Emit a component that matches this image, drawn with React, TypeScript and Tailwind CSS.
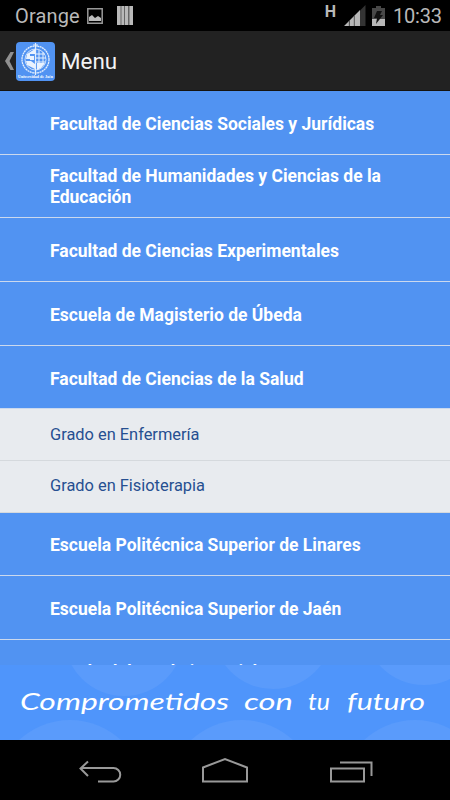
import React from 'react';

interface MenuRow {
  label: string;
  layout: string;
  children?: string[];
}

const rows: MenuRow[] = [
  { label: 'Facultad de Ciencias Sociales y Jurídicas', layout: 'h-16 pt-[3px]' },
  { label: 'Facultad de Humanidades y Ciencias de la Educación', layout: 'h-[63px] pt-px' },
  { label: 'Facultad de Ciencias Experimentales', layout: 'h-16 pt-[3px]' },
  { label: 'Escuela de Magisterio de Úbeda', layout: 'h-16 pt-[3px]' },
  { label: 'Facultad de Ciencias de la Salud', layout: 'h-[63px] pt-[4px]', children: ['Grado en Enfermería', 'Grado en Fisioterapia'] },
  { label: 'Escuela Politécnica Superior de Linares', layout: 'h-[63px] pt-[3px]' },
  { label: 'Escuela Politécnica Superior de Jaén', layout: 'h-16 pt-[3px]' },
  { label: 'Facultad de Trabajo Social', layout: 'h-[63px] pt-[2px]' },
];

const StatusBar: React.FC = () => (
  <div className="h-[31px] shrink-0 flex items-center bg-black text-[#b9b9b9] text-[20px] pl-[15px] pr-2">
    <span className="w-[65px] tracking-[0.15px] whitespace-nowrap">Orange</span>
    <svg className="ml-[7px]" width="16" height="16" viewBox="0 0 16 16">
      <path d="M.8.8h14.4v14.4H.8z" fill="none" stroke="#999" strokeWidth="1.5" />
      <path d="M2 13V9l3-2 3 3 3-2 3 2v3z" fill="#bbb" />
    </svg>
    <svg className="ml-[14px]" width="16" height="19" viewBox="0 0 16 19">
      <path d="M0 0h16v19H0z" fill="#666" />
      <path d="M0 0h3.500v19H0zM4.500 0h2.500v19H4.500zM8 0h3v19H8zM12.500 0H16v19h-3.500z" fill="#b9b9b9" />
    </svg>
    <span className="ml-auto mb-[7px] text-[16px] font-bold leading-none">H</span>
    <svg className="ml-2" width="22" height="21" viewBox="0 0 22 21">
      <path d="M16 5.500L21.500 0v21H16z" fill="#333" />
      <path d="M0 21l5-5v5zM5.500 15.500L10 11v10H5.500zM10 11l6-6v16h-6z" fill="#b8b8b8" />
      <path d="M5.300 16v5M10.300 11v10" stroke="#555" />
    </svg>
    <svg className="ml-[6px]" width="13" height="20" viewBox="0 0 13 20">
      <path d="M4 0h5v2h4v18H0V2h4z" fill="#484848" />
      <path d="M0 13h13v7H0z" fill="#b8b8b8" />
      <path d="M5 5h5L8 9h3l-7 9 1-6H2z" fill="#111" />
    </svg>
    <span className="ml-[8px] w-[49px] tracking-[-0.2px] whitespace-nowrap">10:33</span>
  </div>
);

const Logo: React.FC = () => (
  <svg width="39" height="39" viewBox="0 0 39 39">
    <rect width="39" height="39" rx="4" fill="#5193f2" />
    <g fill="none" stroke="#e4effd">
      <circle cx="19.500" cy="17.500" r="13.500" strokeWidth="1.300" strokeDasharray="2 .5" />
      <circle cx="19.500" cy="17.500" r="10.500" strokeWidth=".8" />
      <path d="M19.500 1v32M17 3h5" strokeWidth="1.200" />
      <path d="M20 12h9M20 16h10M20 20h9M23 8v15M27 10v13" strokeWidth="1" />
    </g>
    <path d="M11 12l8-5v5h-5v5h-4zM10 19h5l4 3v5l-8-4zM21 21h8l-4 5-4 2zM14 14h4v4h-4z" fill="#e9f2fe" />
    <text x="2" y="36" fontSize="4" fontWeight="bold" fontFamily="Liberation Serif, serif" fill="#fff" textLength="35">Universidad de Jaén</text>
  </svg>
);

const ActionBar: React.FC = () => (
  <div className="h-[60px] shrink-0 flex items-center bg-[#222] border-b border-b-[#151310] pl-[5px]">
    <svg width="9" height="18" viewBox="0 0 9 18">
      <path d="M5.500 0H9L4.500 9 9 18H5.500L0 9z" fill="#909090" />
    </svg>
    <div className="ml-[2px] mt-px">
      <Logo />
    </div>
    <h1 className="ml-[6px] mt-[3px] text-[22.400px] text-[#f3f3f3]">Menu</h1>
  </div>
);

const Menu: React.FC = () => (
  <div className="flex-1 min-h-0 overflow-hidden bg-[#5193f2]">
    {rows.map((row) => (
      <div key={row.label}>
        <div className={`${row.layout} flex items-center border-b border-[#cbd9ee] bg-[#5193f2] pl-[50px] pr-10 text-[17.500px] leading-[21px] font-bold text-white`}>
          {row.label}
        </div>
        {row.children?.map((child) => (
          <div key={child} className="h-[52px] flex items-center bg-[#e8ebef] border-b border-[#d5d9dd] first-of-type:pt-0 pt-px last:pt-0 pl-[50px] text-[16.400px] text-[#264f91]">
            {child}
          </div>
        ))}
      </div>
    ))}
  </div>
);

const Banner: React.FC = () => (
  <svg className="shrink-0" width="450" height="75" viewBox="0 0 450 75">
    <rect width="450" height="75" fill="#4f95fb" />
    <g fill="#5a9bfb">
      <circle cx="124" cy="-29" r="60" />
      <circle cx="273" cy="-36" r="60" />
      <circle cx="424" cy="-40" r="60" />
      <circle cx="70" cy="130" r="75" />
      <circle cx="242" cy="130" r="75" />
      <circle cx="415" cy="130" r="75" />
    </g>
    <g fill="#fff" fontFamily="Lato, sans-serif" fontStyle="italic" fontSize="22.500">
      <text x="20" y="45" textLength="209" lengthAdjust="spacingAndGlyphs">Comprometidos</text>
      <text x="244" y="45" textLength="49" lengthAdjust="spacingAndGlyphs">con</text>
      <text x="308" y="45" textLength="22" lengthAdjust="spacingAndGlyphs">tu</text>
      <text x="347" y="45" textLength="78" lengthAdjust="spacingAndGlyphs">futuro</text>
    </g>
  </svg>
);

const NavBar: React.FC = () => (
  <svg className="shrink-0 bg-black" width="450" height="60" viewBox="0 0 450 60" fill="none" stroke="#999" strokeWidth="2">
    <path d="M98 41.500h15.500a6.700 6.700 0 0 0 0-13.500H81M88 21.500L80.500 28.500l7.500 7.500" />
    <path d="M203 41.500V27.500l22-8.500 22 8.500v14z" />
    <path d="M331 28.500h33v13h-33zM340 22.500h31.500V36" />
  </svg>
);

const App: React.FC = () => {
  return (
    <div className="w-[450px] h-[800px] flex flex-col overflow-hidden bg-black font-[Roboto,sans-serif]">
      <StatusBar />
      <ActionBar />
      <Menu />
      <Banner />
      <NavBar />
    </div>
  );
};

export default App;
